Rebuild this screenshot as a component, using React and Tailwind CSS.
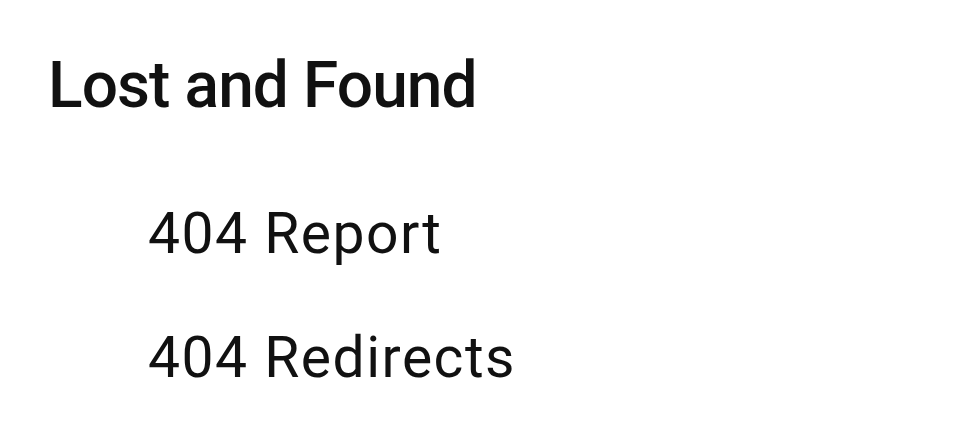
export default function App() {
  const links = ['404 Report', '404 Redirects'];

  return (
    <div className="w-[980px] h-[441px] bg-white overflow-hidden font-['Roboto',sans-serif] text-[#111]">
      <div className="pl-[48px] pt-[54px]">
        <h1 className="text-[64px] leading-[64px] font-medium tracking-[-0.9px]">Lost and Found</h1>
        <ul className="pl-[100px] mt-[84px] flex flex-col gap-[60px]">
          {links.map((label) => (
            <li key={label} className="text-[57px] leading-[64px] tracking-[1.5px]">
              {label}
            </li>
          ))}
        </ul>
      </div>
    </div>
  );
}
